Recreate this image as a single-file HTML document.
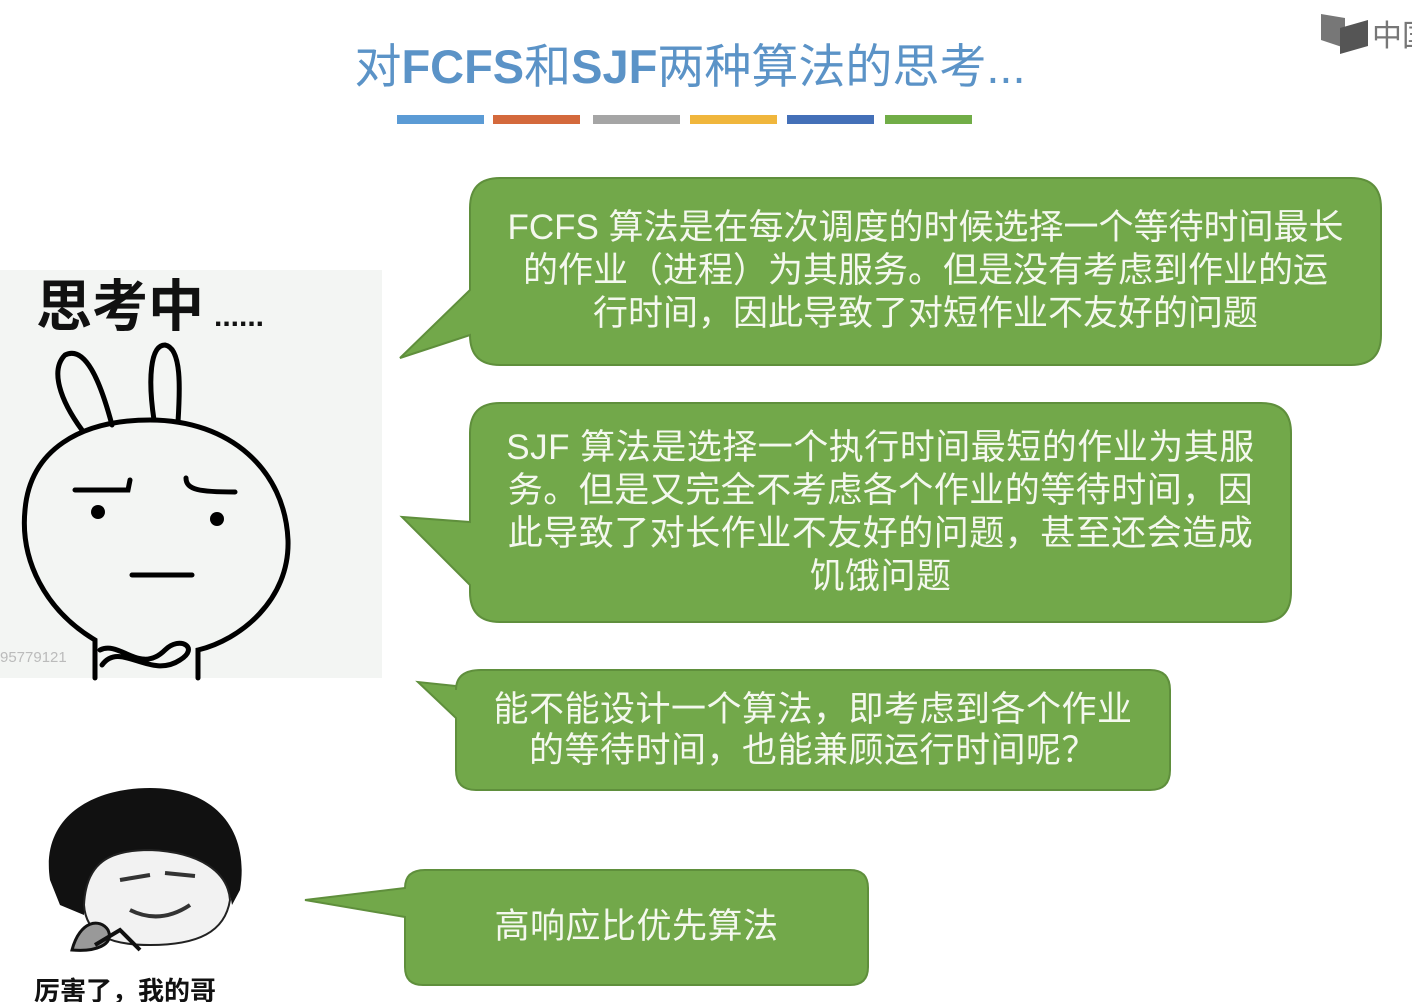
<!DOCTYPE html>
<html><head><meta charset="utf-8"><style>
html,body{margin:0;padding:0;}
body{width:1412px;height:1002px;background:#fff;position:relative;overflow:hidden;font-family:"Liberation Sans","Noto Sans CJK SC",sans-serif;}
.t{position:absolute;color:#f4f8ee;font-size:35px;line-height:43px;text-align:center;white-space:nowrap;letter-spacing:0.5px;}
.title{position:absolute;left:340px;top:28px;width:700px;text-align:center;font-size:47px;color:#5b93c7;white-space:nowrap;}
.title b{font-weight:bold;}
</style></head><body>
<svg width="1412" height="1002" style="position:absolute;left:0;top:0">
<g>
<rect x="397" y="115" width="87" height="9" fill="#5b9bd5"/>
<rect x="493" y="115" width="87" height="9" fill="#d4693c"/>
<rect x="593" y="115" width="87" height="9" fill="#a5a5a5"/>
<rect x="690" y="115" width="87" height="9" fill="#f0b63c"/>
<rect x="787" y="115" width="87" height="9" fill="#4470b8"/>
<rect x="885" y="115" width="87" height="9" fill="#71ad47"/>
</g>
<path d="M1321 14 L1345 18 L1345 48 L1321 40 Z" fill="#777"/>
<path d="M1340 28 L1368 20 L1368 46 L1340 54 Z" fill="#555"/>
<text x="1372" y="46" font-size="30" fill="#777" font-family="Noto Sans CJK SC">中国</text>
<rect x="0" y="270" width="382" height="408" fill="#f3f5f3"/>
<text x="36" y="326" font-size="56" font-weight="bold" fill="#111" font-family="Noto Sans CJK SC">思考中</text>
<text x="214" y="326" font-size="30" fill="#111" font-weight="bold">......</text>
<g fill="none" stroke="#000" stroke-width="5" stroke-linecap="round">
<path d="M82 430 C60 400 50 370 65 355 C85 345 100 380 112 425"/>
<path d="M154 420 C148 380 150 345 165 345 C182 348 180 390 178 422"/>
<path d="M95 678 L95 640 C45 610 20 560 25 510 C30 450 80 420 150 420 C230 420 285 470 288 540 C290 600 240 640 198 650 L198 678"/>
<path d="M75 490 L128 490 L130 480"/>
<path d="M186 478 C186 490 200 492 235 492"/>
<path d="M132 575 L192 575"/>
<path d="M102 665 C120 640 150 680 180 660 C200 648 180 635 165 650 C140 675 120 640 100 650"/>
</g>
<circle cx="98" cy="512" r="7" fill="#000"/>
<circle cx="217" cy="519" r="7" fill="#000"/>
<text x="0" y="662" font-size="15" fill="#bbb">95779121</text>
<path d="M50 880 C40 815 95 788 150 788 C215 788 250 830 240 890 L232 905 C228 875 205 852 150 850 C110 852 88 870 84 915 L60 905 Z" fill="#111"/>
<path d="M84 905 C86 862 110 850 150 850 C200 852 228 872 230 900 C225 932 198 945 150 945 C110 945 86 935 84 905Z" fill="#f2f2f2" stroke="#222" stroke-width="2"/>
<path d="M120 880 L150 875 M165 873 L195 876 M130 910 Q160 925 190 905" stroke="#333" stroke-width="4" fill="none"/>
<path d="M72 950 C80 920 100 918 108 930 C115 945 95 952 72 950Z" fill="#999" stroke="#111" stroke-width="3"/>
<path d="M95 945 L120 930 L140 950" stroke="#111" stroke-width="4" fill="none"/>
<text x="34" y="1000" font-size="26" font-weight="bold" fill="#111" font-family="Noto Sans CJK SC">厉害了，我的哥</text>
<g fill="#72a84a" stroke="#5f8f3c" stroke-width="2">
<path d="M500 178 L1351 178 Q1381 178 1381 208 L1381 335 Q1381 365 1351 365 L500 365 Q470 365 470 335 L470 335 L400 358 L470 290 L470 208 Q470 178 500 178 Z"/>
<path d="M500 403 L1261 403 Q1291 403 1291 433 L1291 592 Q1291 622 1261 622 L500 622 Q470 622 470 592 L470 585 L402 517 L470 522 L470 433 Q470 403 500 403 Z"/>
<path d="M481 670 L1150 670 Q1170 670 1170 690 L1170 770 Q1170 790 1150 790 L476 790 Q456 790 456 770 L456 718 L418 682 L456 686 L456 690 Q456 670 481 670 Z"/>
<path d="M425 870 L850 870 Q868 870 868 888 L868 967 Q868 985 850 985 L423 985 Q405 985 405 967 L405 917 L305 900 L405 888 Q405 870 425 870 Z"/>
</g>
</svg>
<div class="title">对<b>FCFS</b>和<b>SJF</b>两种算法的思考...</div>
<div class="t" style="left:470px;width:911px;top:206px;letter-spacing:0;">FCFS 算法是在每次调度的时候选择一个等待时间最长<br>的作业（进程）为其服务。但是没有考虑到作业的运<br>行时间，因此导致了对短作业不友好的问题</div>
<div class="t" style="left:470px;width:821px;top:426px;">SJF 算法是选择一个执行时间最短的作业为其服<br>务。但是又完全不考虑各个作业的等待时间，因<br>此导致了对长作业不友好的问题，甚至还会造成<br>饥饿问题</div>
<div class="t" style="left:456px;width:714px;top:689px;line-height:41px;">能不能设计一个算法，即考虑到各个作业<br>的等待时间，也能兼顾运行时间呢？</div>
<div class="t" style="left:405px;width:463px;top:905px;">高响应比优先算法</div>
</body></html>
